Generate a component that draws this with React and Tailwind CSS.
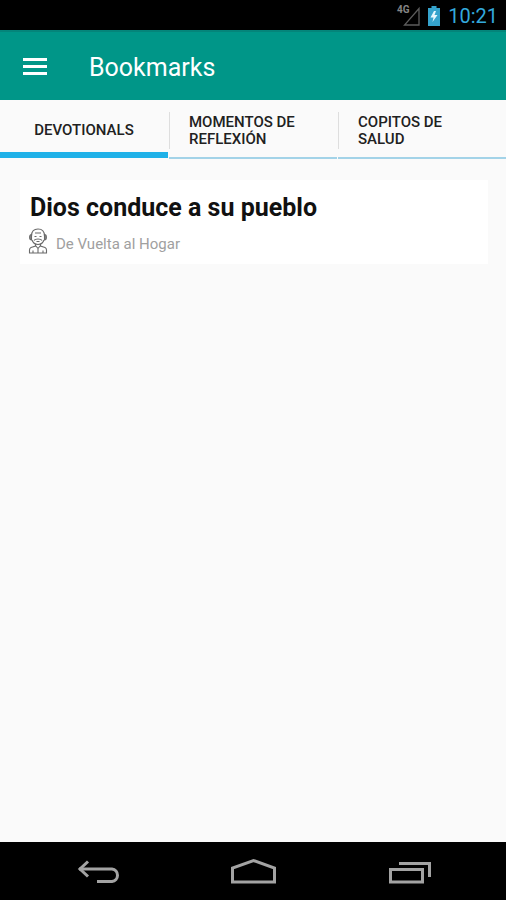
import { useState } from 'react'

const tabs = [
  { id: 'devotionals', label: 'Devotionals' },
  { id: 'momentos', label: 'Momentos de Reflexión' },
  { id: 'copitos', label: 'Copitos de Salud' },
]

function StatusBar() {
  return (
    <div className="flex h-[30px] items-center justify-end bg-black pt-[2px] pr-2">
      <svg className="h-6 w-6" viewBox="0 0 24 24" fill="none">
        <path d="M23 4.500V21H8.500Z" stroke="#5c5c5c" strokeWidth="1.300" />
        <text x="1" y="9" fontSize="10" fontWeight="700" fontFamily="Roboto, sans-serif" fill="#858585">4G</text>
      </svg>
      <svg className="ml-2 h-5 w-3" viewBox="0 0 12 20">
        <path d="M3.500 0H8.500V2H12V20H0V2H3.500Z" fill="#35a3cc" />
        <path d="M6 5L2.500 11.500H5.500L4.500 16L9.500 9H6.500L8 5Z" fill="#e6f7fd" />
      </svg>
      <span className="ml-2 text-xl leading-none text-[#33a9dc]">10:21</span>
    </div>
  )
}

function PersonIcon() {
  return (
    <svg className="h-[26px] w-5" viewBox="0 0 20 26" fill="none" stroke="#6a6a6a" strokeWidth="1.100">
      <path d="M3.500 8C3.500 3 6 1 10 1s6.500 2 6.500 7" />
      <path d="M3.500 6.500C1 6.500 1 12 3.500 12ZM16.500 6.500c2.500 0 2.500 5.500 0 5.500Z" fill="#8a8a8a" />
      <path d="M4 12c1 3 3 4.500 6 4.500s5-1.500 6-4.500" />
      <path d="M7 5h6M6.500 8.500h2M11.500 8.500h2M6 12.500c1-2 7-2 8 0M8.500 13.500h3" />
      <path d="M7.500 16v2L3 19.500C2 20 1.500 21 1.500 22V25h17v-3c0-1-.5-2-1.500-2.500L12.500 18v-2" />
      <path d="M7.500 17.500L10 20.500l2.500-3M10 20.500V25M5 22.500V25M15 22.500V25" />
    </svg>
  )
}

function NavBar() {
  const button = 'flex h-full flex-1 items-center justify-center'
  return (
    <nav className="flex h-[58px] bg-black px-5 text-[#a3a3a3]">
      <button type="button" aria-label="Back" className={button}>
        <svg className="h-8 w-12" viewBox="0 0 48 32" fill="none" stroke="currentColor" strokeWidth="3">
          <path d="M5 14H38a6.300 6.300 0 0 1 0 12.500H23" />
          <path d="M14 6.500L6 14L14 21.500" />
        </svg>
      </button>
      <button type="button" aria-label="Home" className={button}>
        <svg className="h-8 w-12" viewBox="0 0 48 32" fill="none" stroke="currentColor" strokeWidth="3">
          <path d="M3.500 27V13L24.500 5.500L45.500 13V27Z" />
        </svg>
      </button>
      <button type="button" aria-label="Recent apps" className={button}>
        <svg className="h-8 w-12" viewBox="0 0 48 32" fill="none" stroke="currentColor" strokeWidth="3">
          <path d="M6.500 14.500H38.500V27H6.500Z" />
          <path d="M15 8.500H45.500V22" />
        </svg>
      </button>
    </nav>
  )
}

export default function App() {
  const [active, setActive] = useState('devotionals')

  return (
    <div className="flex min-h-screen flex-col bg-[#fafafa] font-[Roboto,sans-serif]">
      <StatusBar />

      <header className="flex h-[70px] items-center border-t-2 border-[#04857a] bg-[#009688] pl-[23px] text-white">
        <button type="button" aria-label="Open menu" className="flex w-6 flex-col gap-1">
          <span className="h-[3px] bg-white" />
          <span className="h-[3px] bg-white" />
          <span className="h-[3px] bg-white" />
        </button>
        <h1 className="ml-[42px] pt-[3px] text-[25px] leading-8">Bookmarks</h1>
      </header>

      <div role="tablist" className="flex h-[60px] gap-px pb-px">
        {tabs.map((tab, i) => (
          <button
            key={tab.id}
            type="button"
            role="tab"
            aria-selected={active === tab.id}
            onClick={() => setActive(tab.id)}
            className={`flex flex-1 flex-col ${active === tab.id ? 'pb-px' : ''}`}
          >
            <span
              className={`mt-3 flex h-[37px] w-full items-center text-[15px] leading-[17px] font-medium text-[#212121] uppercase ${
                i === 0 ? 'justify-center' : 'border-l border-[#dedede] pr-5 pl-[19px] text-left'
              }`}
            >
              {tab.label}
            </span>
            <span className={`mt-auto w-full ${active === tab.id ? 'h-[6px] bg-[#1fb1e8]' : 'h-[2px] bg-[#a3d3e8]'}`} />
          </button>
        ))}
      </div>

      <main className="flex-1 pt-5 pr-[18px] pl-5">
        <article className="bg-white px-2 pt-3 pb-[10px]">
          <h2 className="pl-[2px] text-[25px] leading-8 font-bold text-[#111111]">Dios conduce a su pueblo</h2>
          <div className="mt-1 flex items-center gap-2">
            <PersonIcon />
            <p className="pt-[6px] text-[15px] leading-5 text-[#a0a0a0]">De Vuelta al Hogar</p>
          </div>
        </article>
      </main>

      <NavBar />
    </div>
  )
}
